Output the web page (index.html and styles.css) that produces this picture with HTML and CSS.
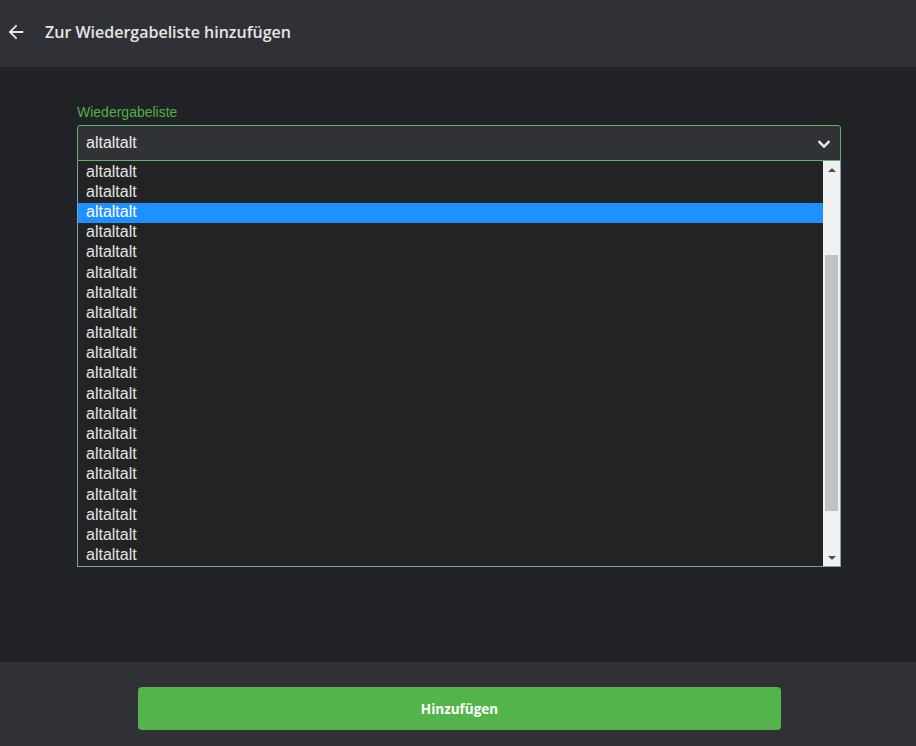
FILE: index.html
```html
<!DOCTYPE html>
<html lang="de">
<head>
<meta charset="utf-8">
<title>Zur Wiedergabeliste hinzufügen</title>
<link rel="stylesheet" href="styles.css">
</head>
<body>
<div class="app">
  <header class="topbar">
    <span class="back">
      <svg width="22" height="22" viewBox="0 0 24 24"><path d="M20 11H7.83l5.59-5.59L12 4l-8 8 8 8 1.41-1.41L7.83 13H20v-2z" fill="#e8e8e8"/></svg>
    </span>
    <h1 class="title">Zur Wiedergabeliste hinzufügen</h1>
  </header>
  <main class="content">
    <div class="field">
      <label class="label">Wiedergabeliste</label>
      <div class="select">
        <span class="select-value">altaltalt</span>
        <svg class="chev" width="24" height="24" viewBox="0 0 24 24"><path d="M16.59 8.59L12 13.17 7.41 8.59 6 10l6 6 6-6z" fill="#e8e8e8" stroke="#e8e8e8" stroke-width="0.6"/></svg>
      </div>
      <div class="listbox">
        <div class="options">
          <div class="opt">altaltalt</div>
          <div class="opt">altaltalt</div>
          <div class="opt selected">altaltalt</div>
          <div class="opt">altaltalt</div>
          <div class="opt">altaltalt</div>
          <div class="opt">altaltalt</div>
          <div class="opt">altaltalt</div>
          <div class="opt">altaltalt</div>
          <div class="opt">altaltalt</div>
          <div class="opt">altaltalt</div>
          <div class="opt">altaltalt</div>
          <div class="opt">altaltalt</div>
          <div class="opt">altaltalt</div>
          <div class="opt">altaltalt</div>
          <div class="opt">altaltalt</div>
          <div class="opt">altaltalt</div>
          <div class="opt">altaltalt</div>
          <div class="opt">altaltalt</div>
          <div class="opt">altaltalt</div>
          <div class="opt">altaltalt</div>
        </div>
        <div class="scrollbar">
          <div class="arrow up"></div>
          <div class="track">
            <div class="thumb"></div>
          </div>
          <div class="arrow down"></div>
        </div>
      </div>
    </div>
  </main>
  <footer class="footer">
    <button class="btn">Hinzufügen</button>
  </footer>
</div>
</body>
</html>
```
FILE: styles.css
```css
* { box-sizing: border-box; }
html, body { margin: 0; padding: 0; }
body {
  width: 916px;
  height: 746px;
  background: #212225;
  font-family: "Liberation Sans", Arial, sans-serif;
  overflow: hidden;
}
.app {
  display: flex;
  flex-direction: column;
  height: 746px;
}
.topbar {
  height: 67px;
  background: #303136;
  display: flex;
  align-items: center;
  padding-left: 5px;
  padding-bottom: 3px;
  flex: none;
}
.back {
  display: flex;
  width: 22px;
  height: 22px;
  margin-right: 18px;
}
.title {
  margin: 0;
  font-family: "Open Sans", sans-serif;
  font-weight: 600;
  font-size: 16px;
  color: #e6e6e6;
}
.content {
  flex: 1;
  padding: 37px 75px 0 77px;
}
.field {
  display: flex;
  flex-direction: column;
  width: 764px;
}
.label {
  color: #4fb04a;
  font-size: 14px;
  line-height: 16px;
  margin-bottom: 5px;
}
.select {
  height: 36px;
  background: #313236;
  border: 1px solid #5bb46a;
  border-radius: 3px 3px 0 0;
  display: flex;
  align-items: center;
  justify-content: space-between;
  padding: 0 4px 0 8px;
}
.select-value {
  color: #ececec;
  font-size: 16px;
}
.chev { display: block; margin-top: 1px; }
.listbox {
  height: 406px;
  border: 1px solid #7f9db9;
  border-top: none;
  background: #232323;
  display: flex;
}
.options {
  flex: 1;
  display: flex;
  flex-direction: column;
  padding-top: 1.6px;
  overflow: hidden;
}
.opt {
  height: 20.2px;
  line-height: 17px;
  padding-left: 8px;
  color: #e4e4e4;
  font-size: 16px;
  flex: none;
}
.opt.selected {
  background: #1e90ff;
  color: #ffffff;
}
.scrollbar {
  width: 17px;
  background: #f0f0f0;
  display: flex;
  flex-direction: column;
}
.arrow {
  height: 17px;
  display: flex;
  align-items: center;
  justify-content: center;
  flex: none;
}
.arrow::before {
  content: "";
  width: 0;
  height: 0;
  border-left: 4px solid transparent;
  border-right: 4px solid transparent;
}
.arrow.up::before { border-bottom: 4px solid #505050; }
.arrow.down::before { border-top: 4px solid #505050; }
.track {
  flex: 1;
  padding: 77px 2px 38px 2px;
  display: flex;
}
.thumb {
  flex: 1;
  background: #c1c1c1;
}
.footer {
  height: 84px;
  background: #303136;
  flex: none;
  display: flex;
  justify-content: center;
  padding-top: 25px;
  padding-left: 3px;
}
.btn {
  width: 643px;
  height: 43px;
  background: #52b44b;
  border: none;
  border-radius: 4px;
  color: #ffffff;
  font-family: "Open Sans", sans-serif;
  font-weight: 700;
  font-size: 13.5px;
  cursor: pointer;
}
```
